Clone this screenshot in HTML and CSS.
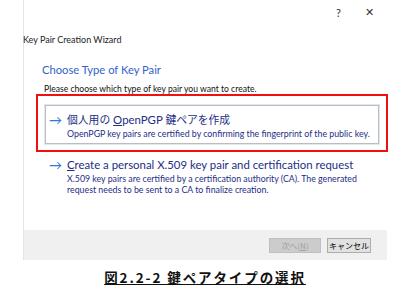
FILE: index.html
```html
<!DOCTYPE html>
<html lang="ja">
<head>
    <meta charset="UTF-8">
    <title>Key Pair Creation Wizard</title>
    <link rel="stylesheet" href="styles.css">
</head>
<body>
    <div class="dialog">
        <div class="titlebar">
            <span class="help">?</span>
            <span class="close">&#x2715;</span>
        </div>
        <div class="wizard-name">Key Pair Creation Wizard</div>
        <div class="content">
            <h1 class="heading">Choose Type of Key Pair</h1>
            <p class="intro">Please choose which type of key pair you want to create.</p>

            <div class="highlight">
                <div class="option selected">
                    <span class="arrow">&#x2192;</span>
                    <div class="option-text">
                        <div class="option-title"><span class="ja">個人用の</span> <u>O</u>penPGP <span class="ja">鍵ペアを作成</span></div>
                        <div class="option-desc">OpenPGP key pairs are certified by confirming the fingerprint of the public key.</div>
                    </div>
                </div>
            </div>

            <div class="option second">
                <span class="arrow">&#x2192;</span>
                <div class="option-text">
                    <div class="option-title"><u>C</u>reate a personal X.509 key pair and certification request</div>
                    <div class="option-desc narrow">X.509 key pairs are certified by a certification authority (CA). The generated request needs to be sent to a CA to finalize creation.</div>
                </div>
            </div>
        </div>
        <div class="footer">
            <button class="btn" disabled>次へ(<u>N</u>)</button>
            <button class="btn">キャンセル</button>
        </div>
    </div>
    <div class="caption"><span>図2.2-2 鍵ペアタイプの選択</span></div>
</body>
</html>
```

FILE: styles.css
```css
body {
    margin: 0;
    background-color: #fff;
    font-family: Lato, "Noto Sans CJK JP", sans-serif;
    color: #000;
}
.dialog {
    margin-left: 23px;
    width: 363px;
    height: 260px;
    border-left: 1px solid #e4e4e4;
    display: flex;
    flex-direction: column;
}
.titlebar {
    height: 24px;
    display: flex;
    justify-content: flex-end;
    align-items: center;
    gap: 24px;
    padding-right: 13px;
    font-size: 11px;
    color: #333;
}
.close {
    font-size: 11px;
}
.wizard-name {
    margin-top: 10px;
    margin-left: -1px;
    font-size: 9px;
    line-height: 11px;
    color: #222;
}
.content {
    flex: 1;
    padding-left: 12px;
}
.heading {
    margin: 17px 0 0 6px;
    font-size: 11.2px;
    line-height: 16px;
    font-weight: normal;
    color: #3264c8;
}
.intro {
    margin: 7px 0 0 8px;
    font-size: 8.6px;
    line-height: 9px;
    color: #111;
}
.highlight {
    width: 334px;
    border: 2px solid #f01010;
    padding: 9px 7px 6px 7px;
    margin-top: 0;
}
.option {
    display: flex;
    align-items: flex-start;
    padding: 6px 0 4px 3px;
    border: 1px solid transparent;
}
.option.selected {
    border-color: #bdbdbd;
    box-shadow: 0 0 0 1px #dbe8f6;
}
.option.second {
    margin: 0 0 0 9px;
    padding-top: 4px;
}
.arrow {
    width: 18px;
    font-size: 13px;
    line-height: 16px;
    height: 16px;
    color: #2b7bd8;
}
.option-title {
    font-size: 11.4px;
    line-height: 16px;
    height: 16px;
    color: #1e2e86;
}
.option-title .ja {
    font-size: 10.8px;
}
.option-desc {
    font-size: 8.8px;
    line-height: 11px;
    color: #1e2e86;
}
.option-desc.narrow {
    width: 292px;
}
.footer {
    height: 30px;
    background-color: #f0f0f0;
    display: flex;
    justify-content: flex-end;
    align-items: center;
    gap: 6px;
    padding-right: 16px;
}
.btn {
    height: 15px;
    padding: 0;
    font-family: "Noto Sans CJK JP", sans-serif;
    font-size: 8px;
    background-color: #e1e1e1;
    border: 1px solid #adadad;
    color: #000;
}
.btn:first-child {
    width: 52px;
}
.btn:last-child {
    width: 44px;
}
.btn:disabled {
    color: #a0a0a0;
    background-color: #cccccc;
    border-color: #bfbfbf;
}
.caption {
    text-align: center;
    margin-top: 7px;
    padding-right: 10px;
}
.caption span {
    font-family: "Noto Sans CJK JP", sans-serif;
    font-size: 13.5px;
    font-weight: bold;
    letter-spacing: 1.9px;
    text-decoration: underline;
    color: #111;
}
```
